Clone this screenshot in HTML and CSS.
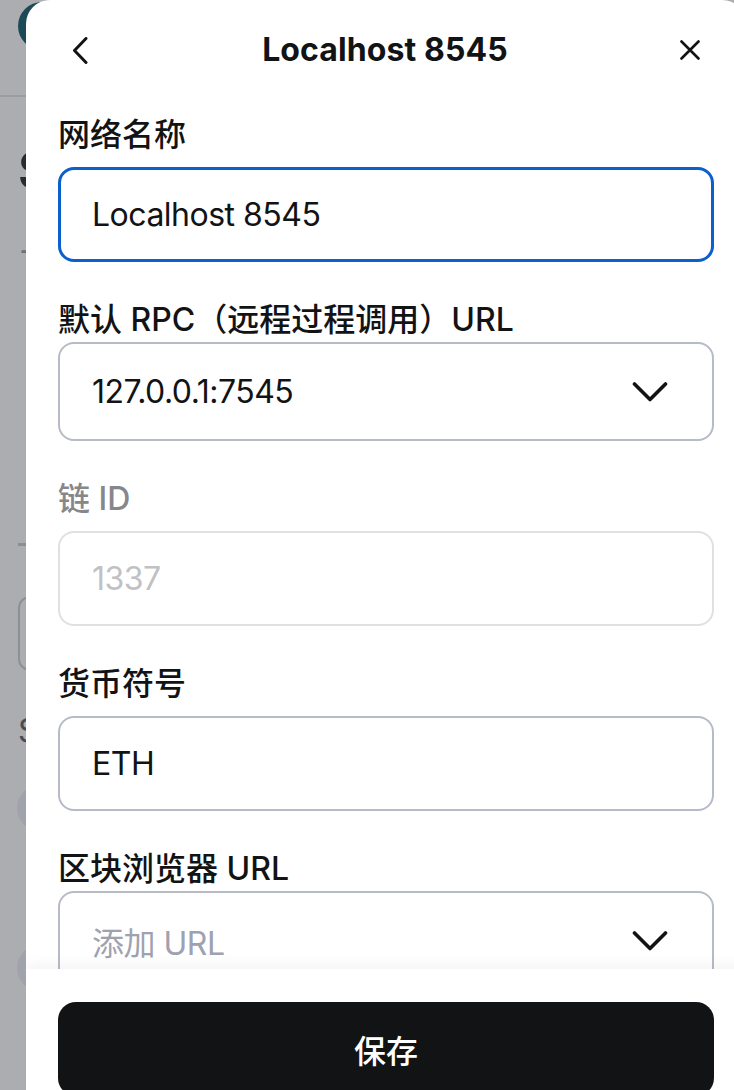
FILE: index.html
```html
<!DOCTYPE html>
<html lang="zh-CN">
<head>
<meta charset="utf-8">
<title>Localhost 8545</title>
<link rel="stylesheet" href="styles.css">
</head>
<body>
<div class="page">
  <div class="bg-header"><span class="bg-avatar"></span></div>
  <div class="bg-title">S</div>
  <div class="bg-plus">+</div>
  <div class="bg-rule"></div>
  <div class="bg-box"></div>
  <div class="bg-sub">S</div>
  <span class="bg-dot bg-dot-1"></span>
  <span class="bg-dot bg-dot-2"></span>
</div>

<div class="modal">
  <header class="modal-header">
    <button class="icon-btn" aria-label="返回">
      <svg width="16" height="27" viewBox="0 0 16 27"><path d="M14 1.5 L2.5 13.5 L14 25.5" fill="none" stroke="#121314" stroke-width="3" stroke-linecap="round" stroke-linejoin="round"/></svg>
    </button>
    <h1 class="modal-title">Localhost 8545</h1>
    <button class="icon-btn" aria-label="关闭">
      <svg width="20" height="20" viewBox="0 0 20 20"><path d="M1.5 1.5 L18.5 18.5 M18.5 1.5 L1.5 18.5" fill="none" stroke="#121314" stroke-width="2.6" stroke-linecap="round"/></svg>
    </button>
  </header>

  <div class="modal-body">
    <div class="field">
      <label class="field-label">网络名称</label>
      <div class="input input-focus">Localhost 8545</div>
    </div>

    <div class="field">
      <label class="field-label field-label-select">默认 RPC（远程过程调用）URL</label>
      <div class="input select">
        <span>127.0.0.1:7545</span>
        <svg class="chev" width="36" height="22" viewBox="0 0 36 22"><path d="M2.5 3 L18 18.5 L33.5 3" fill="none" stroke="#121314" stroke-width="3.6" stroke-linecap="round" stroke-linejoin="round"/></svg>
      </div>
    </div>

    <div class="field">
      <label class="field-label label-disabled">链 ID</label>
      <div class="input input-disabled">1337</div>
    </div>

    <div class="field">
      <label class="field-label">货币符号</label>
      <div class="input">ETH</div>
    </div>

    <div class="field">
      <label class="field-label field-label-select">区块浏览器 URL</label>
      <div class="input select">
        <span class="placeholder">添加 URL</span>
        <svg class="chev" width="36" height="22" viewBox="0 0 36 22"><path d="M2.5 3 L18 18.5 L33.5 3" fill="none" stroke="#121314" stroke-width="3.6" stroke-linecap="round" stroke-linejoin="round"/></svg>
      </div>
    </div>
  </div>

  <footer class="modal-footer">
    <button class="save-btn">保存</button>
  </footer>
</div>
</body>
</html>
```

FILE: styles.css
```css
* { box-sizing: border-box; }

html, body {
  margin: 0;
  padding: 0;
  width: 734px;
  height: 1090px;
  overflow: hidden;
}

body {
  position: relative;
  background: #acadb0;
  font-family: Inter, "Noto Sans CJK SC", sans-serif;
  color: #121314;
}

/* ---------- background page (dimmed) ---------- */
.page {
  display: flex;
  flex-direction: column;
  align-items: flex-start;
  padding-left: 18px;
  height: 100%;
}

.bg-header {
  height: 97px;
  padding-top: 2px;
  border-bottom: 2px solid #9c9da2;
  margin-left: -18px;
  padding-left: 18px;
  width: calc(100% + 18px);
}

.bg-avatar {
  display: block;
  width: 48px;
  height: 48px;
  border-radius: 50%;
  background: #1d4a57;
}

.bg-title {
  margin-top: 44px;
  font-size: 52px;
  font-weight: 700;
  line-height: 60px;
  color: #2b2b2e;
}

.bg-plus {
  margin-top: 28px;
  font-size: 36px;
  line-height: 40px;
  color: #6f7078;
}

.bg-rule {
  margin-top: 274px;
  width: 40px;
  height: 3px;
  background: #8d8e95;
}

.bg-box {
  margin-top: 50px;
  width: 100px;
  height: 75px;
  border: 2px solid #8f9096;
  border-radius: 12px;
}

.bg-sub {
  margin-top: 40px;
  font-size: 32px;
  line-height: 40px;
  color: #4b4c52;
}

.bg-dot {
  display: block;
  width: 46px;
  height: 46px;
  border-radius: 50%;
  background: #a0a2ac;
  margin-left: -1px;
}
.bg-dot-1 { margin-top: 34px; }
.bg-dot-2 { margin-top: 114px; }

/* ---------- modal sheet ---------- */
.modal {
  position: absolute;
  top: 0;
  left: 26px;
  width: 720px;
  height: 1090px;
  background: #ffffff;
  border-radius: 24px 24px 0 0;
  display: flex;
  flex-direction: column;
  overflow: hidden;
}

.modal-header {
  flex: none;
  height: 100px;
  display: flex;
  align-items: center;
  justify-content: space-between;
  padding: 0 38px 0 36px;
}

.icon-btn {
  width: 36px;
  height: 36px;
  padding: 0;
  border: 0;
  background: none;
  display: flex;
  align-items: center;
  justify-content: center;
}

.modal-title {
  margin: 0;
  font-size: 32px;
  line-height: 40px;
  font-weight: 700;
  letter-spacing: 0.1px;
}

.modal-body {
  flex: 1;
  min-height: 0;
  overflow: hidden;
  padding: 10px 32px 0;
}

.field {
  display: flex;
  flex-direction: column;
  margin-bottom: 33px;
}

.field-label {
  font-size: 32px;
  line-height: 44px;
  font-weight: 500;
  padding-top: 3px;
  margin-bottom: 10px;
}

.field-label-select { margin-bottom: 0; }

.label-disabled { color: #86878b; }

.input {
  height: 95px;
  border: 2px solid #b7bbc8;
  border-radius: 16px;
  padding: 0 32px;
  display: flex;
  align-items: center;
  font-size: 32px;
  font-weight: 400;
  letter-spacing: -0.5px;
}

.input-focus {
  border: 3px solid #0b5fce;
  padding-left: 31px;
}

.input-disabled {
  border-color: #dfe0e3;
  color: #c0c1c4;
}

.select {
  height: 99px;
  justify-content: space-between;
  padding-right: 44px;
}

.placeholder { color: #9ea2b0; }

.chev { flex: none; }

.modal-footer {
  flex: none;
  height: 121px;
  padding: 33px 32px 0;
  background: #ffffff;
  box-shadow: 0 -4px 14px rgba(0, 0, 0, 0.05);
  position: relative;
}

.save-btn {
  width: 100%;
  height: 94px;
  border: 0;
  border-radius: 18px;
  background: #121314;
  color: #ffffff;
  font-family: Inter, "Noto Sans CJK SC", sans-serif;
  font-size: 32px;
  font-weight: 500;
}
```
